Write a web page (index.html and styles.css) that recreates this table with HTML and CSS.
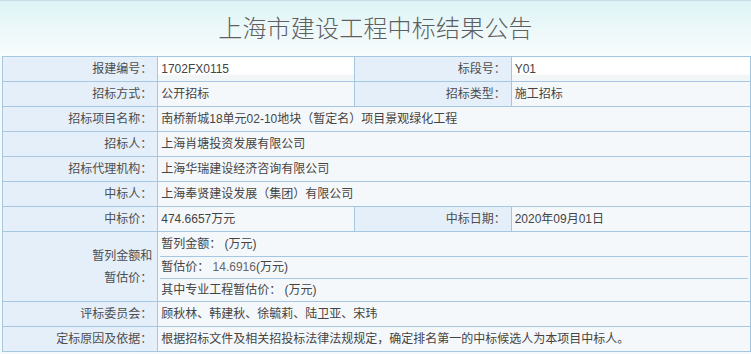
FILE: index.html
```html
<!DOCTYPE html>
<html lang="zh-CN">
<head>
<meta charset="utf-8">
<title>上海市建设工程中标结果公告</title>
<link rel="stylesheet" href="styles.css">
</head>
<body>
<div class="header">
  <h1 class="title">上海市建设工程中标结果公告</h1>
</div>
<table class="info">
  <colgroup>
    <col class="c1"><col class="c2"><col class="c3"><col class="c4">
  </colgroup>
  <tr>
    <th>报建编号：</th><td class="num first">1702FX0115</td>
    <th>标段号：</th><td class="num first">Y01</td>
  </tr>
  <tr>
    <th>招标方式：</th><td>公开招标</td>
    <th>招标类型：</th><td>施工招标</td>
  </tr>
  <tr>
    <th>招标项目名称：</th><td colspan="3">南桥新城18单元02-10地块（暂定名）项目景观绿化工程</td>
  </tr>
  <tr>
    <th>招标人：</th><td colspan="3">上海肖塘投资发展有限公司</td>
  </tr>
  <tr>
    <th>招标代理机构：</th><td colspan="3">上海华瑞建设经济咨询有限公司</td>
  </tr>
  <tr>
    <th>中标人：</th><td colspan="3">上海奉贤建设发展（集团）有限公司</td>
  </tr>
  <tr>
    <th>中标价：</th><td class="num">474.6657万元</td>
    <th>中标日期：</th><td class="num">2020年09月01日</td>
  </tr>
  <tr class="multi">
    <th class="wrap">暂列金额和暂估价：</th>
    <td colspan="3" class="sub">
      <div class="subrow s1">暂列金额： (万元)</div>
      <div class="subrow s2">暂估价： <span class="num">14.6916</span>(万元)</div>
      <div class="subrow s3">其中专业工程暂估价： (万元)</div>
    </td>
  </tr>
  <tr>
    <th>评标委员会：</th><td colspan="3">顾秋林、韩建秋、徐毓莉、陆卫亚、宋玮</td>
  </tr>
  <tr>
    <th>定标原因及依据：</th><td colspan="3">根据招标文件及相关招投标法律法规规定，确定排名第一的中标候选人为本项目中标人。</td>
  </tr>
</table>
</body>
</html>
```
FILE: styles.css
```css
html, body {
  margin: 0;
  padding: 0;
}
body {
  background: #f6f9fb;
  font-family: "Liberation Sans", "Noto Sans CJK SC", sans-serif;
  font-size: 12px;
  color: #4a4a4a;
}
.header {
  height: 55px;
  border-top: 1px solid #c9dde9;
  background: linear-gradient(#ddf4f6, #eff9fa 60%, #f8fcfd);
  display: flex;
  align-items: flex-start;
  justify-content: center;
}
.title {
  margin: 11px 0 0 0;
  font-family: "Noto Sans CJK SC", sans-serif;
  font-weight: 300;
  font-size: 24px;
  line-height: 30px;
  color: #5f5f5f;
  letter-spacing: 0.2px;
}
.info {
  margin: 0 0 0 2px;
  width: 749px;
  table-layout: fixed;
  border-collapse: collapse;
}
.c1 { width: 155px; }
.c2 { width: 197px; }
.c3 { width: 156px; }
.c4 { width: 239px; }
.info th, .info td {
  border: 1px solid #a6c7e2;
  height: 24px;
  padding: 0 4px;
  line-height: 24px;
  white-space: nowrap;
  overflow: hidden;
}
.info th {
  background: #e4eff9;
  font-weight: normal;
  text-align: right;
  padding-right: 5px;
  color: #4d4d4d;
}
.info td {
  background: #f5f8fa;
  text-align: left;
  padding-left: 3px;
  color: #444;
}
.info td.first {
  background: linear-gradient(#ffffff 72%, #f3f6f6 72%);
}
.num {
  color: #666;
}
.info th.wrap {
  white-space: normal;
  line-height: 22px;
  padding-left: 80px;
}
.info td.sub {
  padding: 0 2px;
  vertical-align: top;
}
.subrow {
  padding-left: 1px;
}
.s1 {
  height: 24px;
  line-height: 24px;
  border-bottom: 1px solid #a6c7e2;
}
.s2 {
  height: 21px;
  line-height: 21px;
  border-bottom: 1px solid #a6c7e2;
}
.s3 {
  height: 22px;
  line-height: 22px;
}
```
